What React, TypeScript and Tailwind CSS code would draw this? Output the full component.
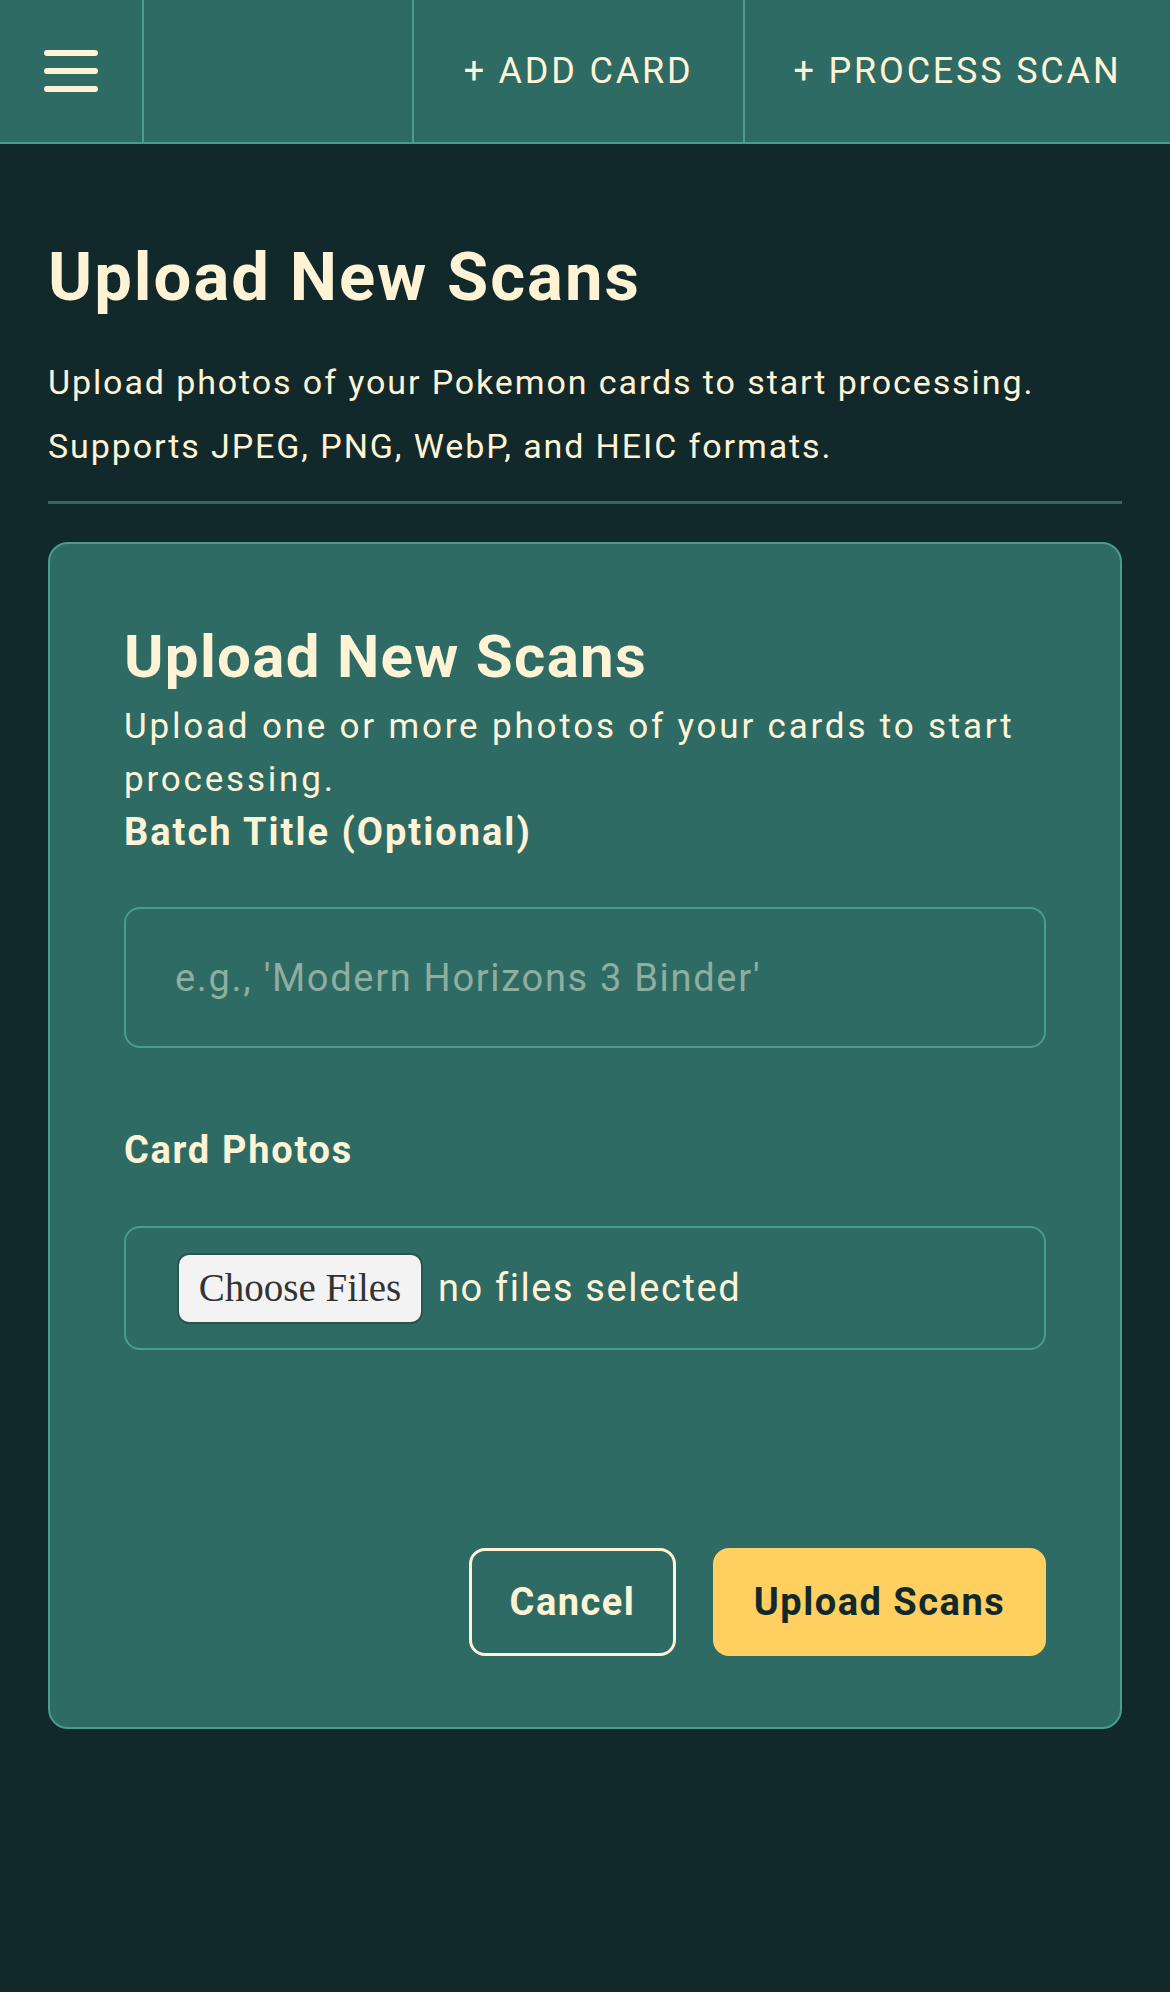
import React from 'react';

const Header: React.FC = () => {
  return (
    <header className="flex h-[144px] border-b-2 border-[#4a9b90] bg-[#2e6b65]">
      <button className="flex w-[144px] shrink-0 items-center justify-center border-r-2 border-[#4a9b90]">
        <svg width="54" height="42" viewBox="0 0 54 42" fill="none">
          <path d="M3 3h48M3 21h48M3 39h48" stroke="#fff3d6" strokeWidth="6" strokeLinecap="round" />
        </svg>
      </button>
      <div className="w-[270px] shrink-0 border-r-2 border-[#4a9b90]" />
      <a className="flex w-[331px] shrink-0 items-center justify-center border-r-2 border-[#4a9b90] text-[36px] uppercase tracking-[2.8px] text-[#fff3d6]">
        + Add Card
      </a>
      <a className="flex flex-1 items-center justify-center text-[36px] uppercase tracking-[2.8px] text-[#fff3d6]">
        + Process Scan
      </a>
    </header>
  );
};

const App: React.FC = () => {
  return (
    <div className="min-h-[1992px] bg-[#12292b] font-['Roboto',sans-serif] text-[#fff3d6]">
      <Header />

      <main className="px-[48px] pt-[100px]">
        <h1 className="text-[67px] font-bold leading-none tracking-[2px]">Upload New Scans</h1>
        <p className="mt-[39px] text-[34px] leading-[64px] tracking-[1.9px]">
          Upload photos of your Pokemon cards to start processing.
          <br />
          Supports JPEG, PNG, WebP, and HEIC formats.
        </p>
        <div className="mt-[23px] h-[3px] bg-[#2e6b65]" />

        <section className="mt-[38px] rounded-[20px] border-2 border-[#4a9b90] bg-[#2e6b65] px-[74px] pt-[83px] pb-[71px]">
          <h2 className="text-[60px] font-bold leading-none tracking-[1.3px]">Upload New Scans</h2>
          <p className="mt-[13px] text-[35px] leading-[53px] tracking-[2.8px]">
            Upload one or more photos of your cards to start processing.
          </p>

          <label className="mt-[4px] block text-[38px] font-bold leading-[44px] tracking-[2px]">
            Batch Title (Optional)
          </label>
          <input
            type="text"
            placeholder="e.g., 'Modern Horizons 3 Binder'"
            className="mt-[53px] block h-[141px] w-full rounded-[16px] border-2 border-[#4a9b90] bg-transparent px-[49px] text-[38px] tracking-[1.7px] text-[#fff3d6] outline-none placeholder:text-[#8fae9f]"
          />

          <label className="mt-[80px] block text-[38px] font-bold leading-[44px] tracking-[1.7px]">Card Photos</label>
          <div className="mt-[54px] flex h-[124px] items-center rounded-[16px] border-2 border-[#4a9b90] px-[51px]">
            <span className="flex h-[71px] w-[246px] items-center justify-center rounded-[12px] border-2 border-[#285550] bg-[#f3f3f3] font-['Liberation_Serif',serif] text-[39px] text-[#333333]">
              Choose Files
            </span>
            <span className="ml-[15px] text-[38px] tracking-[1.6px]">no files selected</span>
          </div>

          <div className="mt-[198px] flex justify-end gap-[37px]">
            <button className="flex h-[108px] w-[207px] items-center justify-center rounded-[16px] border-[3px] border-[#fff3d6] text-[38px] font-bold tracking-[1.5px]">
              Cancel
            </button>
            <button className="flex h-[108px] w-[333px] items-center justify-center rounded-[16px] bg-[#ffd05f] text-[38px] font-bold tracking-[1.5px] text-[#12292b]">
              Upload Scans
            </button>
          </div>
        </section>
      </main>
    </div>
  );
};

export default App;
